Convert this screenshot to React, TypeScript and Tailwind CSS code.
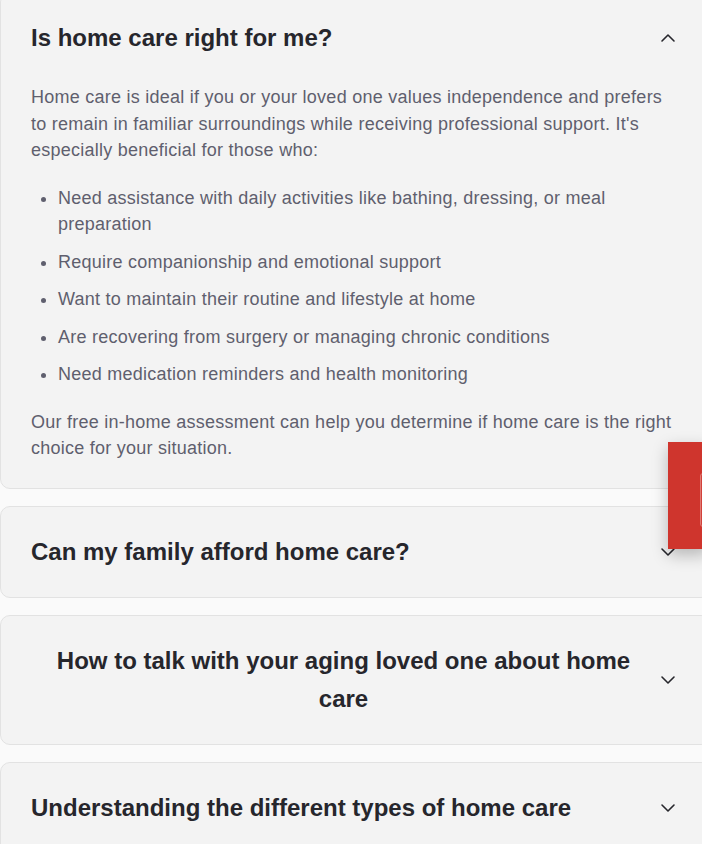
import React from "react";
import { ChevronDown, ChevronUp } from "lucide-react";

const items = [
  "Need assistance with daily activities like bathing, dressing, or meal preparation",
  "Require companionship and emotional support",
  "Want to maintain their routine and lifestyle at home",
  "Are recovering from surgery or managing chronic conditions",
  "Need medication reminders and health monitoring",
];

function Header({ title, open, center }: { title: string; open?: boolean; center?: boolean }) {
  return (
    <div className="flex items-center">
      <h3
        className={
          "flex-1 text-[24px] leading-[38px] font-bold text-[#26262c] " + (center ? "text-center" : "text-left")
        }
      >
        {title}
      </h3>
      {open ? (
        <ChevronUp size={24} strokeWidth={1.6} className="shrink-0 text-[#26262c]" />
      ) : (
        <ChevronDown size={24} strokeWidth={1.6} className="shrink-0 text-[#26262c]" />
      )}
    </div>
  );
}

export default function App() {
  return (
    <div
      className="relative w-full h-[844px] overflow-hidden bg-[#fafafa]"
      style={{ fontFamily: '"Liberation Sans", Arial, sans-serif' }}
    >
      <div className="w-[711px] flex flex-col gap-[17px] -mt-[8px]">
        <div className="rounded-[10px] border border-[#e2e2e2] bg-[#f3f3f3] px-[30px] py-[26px]">
          <Header title="Is home care right for me?" open />
          <div className="mt-[27px] pr-[8px] text-[18px] leading-[26.5px] tracking-[0.25px] text-[#5f5f6e]">
            <p>
              Home care is ideal if you or your loved one values independence and prefers to remain in familiar
              surroundings while receiving professional support. It's especially beneficial for those who:
            </p>
            <ul className="my-[21px] pl-[27px] list-disc flex flex-col gap-[11px] marker:text-[#5f5f6e]">
              {items.map((t) => (
                <li key={t}>{t}</li>
              ))}
            </ul>
            <p>
              Our free in-home assessment can help you determine if home care is the right choice for your
              situation.
            </p>
          </div>
        </div>
        <div className="rounded-[10px] border border-[#e2e2e2] bg-[#f3f3f3] px-[30px] py-[26px]">
          <Header title="Can my family afford home care?" />
        </div>
        <div className="rounded-[10px] border border-[#e2e2e2] bg-[#f3f3f3] px-[30px] py-[26px]">
          <Header title="How to talk with your aging loved one about home care" center />
        </div>
        <div className="rounded-[10px] border border-[#e2e2e2] bg-[#f3f3f3] px-[30px] py-[26px]">
          <Header title="Understanding the different types of home care" />
        </div>
      </div>
      <div className="absolute left-[668px] top-[442px] w-[40px] h-[107px] bg-[#cf352d] shadow-[0_6px_16px_rgba(0,0,0,0.25)]">
        <div className="absolute left-[32px] top-[31px] w-[12px] h-[54px] rounded-[3px] border border-[#e07a73] bg-[#d2423a]" />
      </div>
    </div>
  );
}
